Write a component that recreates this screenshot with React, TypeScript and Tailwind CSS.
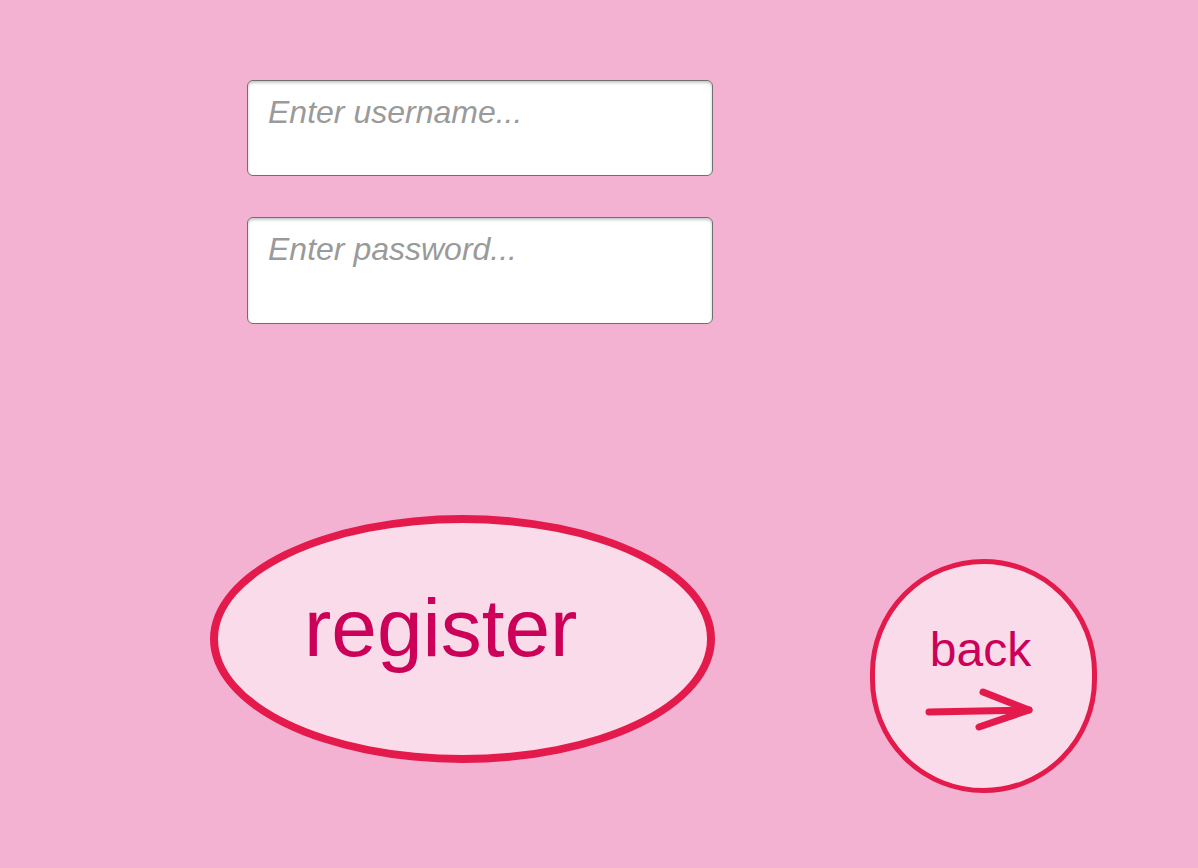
import React from "react";

export default function App() {
  return (
    <div
      className="w-full h-[868px] overflow-hidden bg-[#f4b2d2]"
      style={{ fontFamily: '"Liberation Sans", Arial, sans-serif' }}
    >
      <div className="flex flex-col gap-[41px] pt-[80px] pl-[247px]">
        <textarea
          readOnly
          placeholder="Enter username..."
          className="w-[466px] h-[96px] resize-none bg-white border border-[#6f6f6f] rounded-[6px] pt-[13px] pl-[20px] text-[32px] leading-[36px] outline-none shadow-[inset_0_2px_3px_rgba(0,0,0,0.22)] placeholder:italic placeholder:text-[#9a9a9a]"
          style={{ fontFamily: '"Liberation Sans", Arial, sans-serif' }}
        />
        <textarea
          readOnly
          placeholder="Enter password..."
          className="w-[466px] h-[107px] resize-none bg-white border border-[#6f6f6f] rounded-[6px] pt-[13px] pl-[20px] text-[32px] leading-[36px] outline-none shadow-[inset_0_2px_3px_rgba(0,0,0,0.22)] placeholder:italic placeholder:text-[#9a9a9a]"
          style={{ fontFamily: '"Liberation Sans", Arial, sans-serif' }}
        />
      </div>

      <div className="flex items-start mt-[191px]">
        <button className="ml-[210px] w-[505px] h-[248px] rounded-[50%] border-[8px] border-[#e41a4c] bg-[#fadbe9] flex items-start pt-[64px] pl-[86px] cursor-pointer">
          <span className="text-[82px] leading-[82px] text-[#cc0058]">register</span>
        </button>

        <button className="ml-[155px] mt-[44px] w-[227px] h-[234px] rounded-full border-[5px] border-[#e41a4c] bg-[#fadbe9] flex flex-col items-center pt-[62px] pr-[6px] cursor-pointer">
          <span className="text-[48px] leading-[48px] text-[#cc0058]">back</span>
          <svg
            width="112"
            height="46"
            viewBox="0 0 112 46"
            className="mt-[13px]"
            fill="none"
            stroke="#e41a4c"
            strokeWidth="7"
            strokeLinecap="round"
            strokeLinejoin="round"
          >
            <path d="M4 25 L104 23" />
            <path d="M58 5 L104 23 L54 40" />
          </svg>
        </button>
      </div>
    </div>
  );
}
